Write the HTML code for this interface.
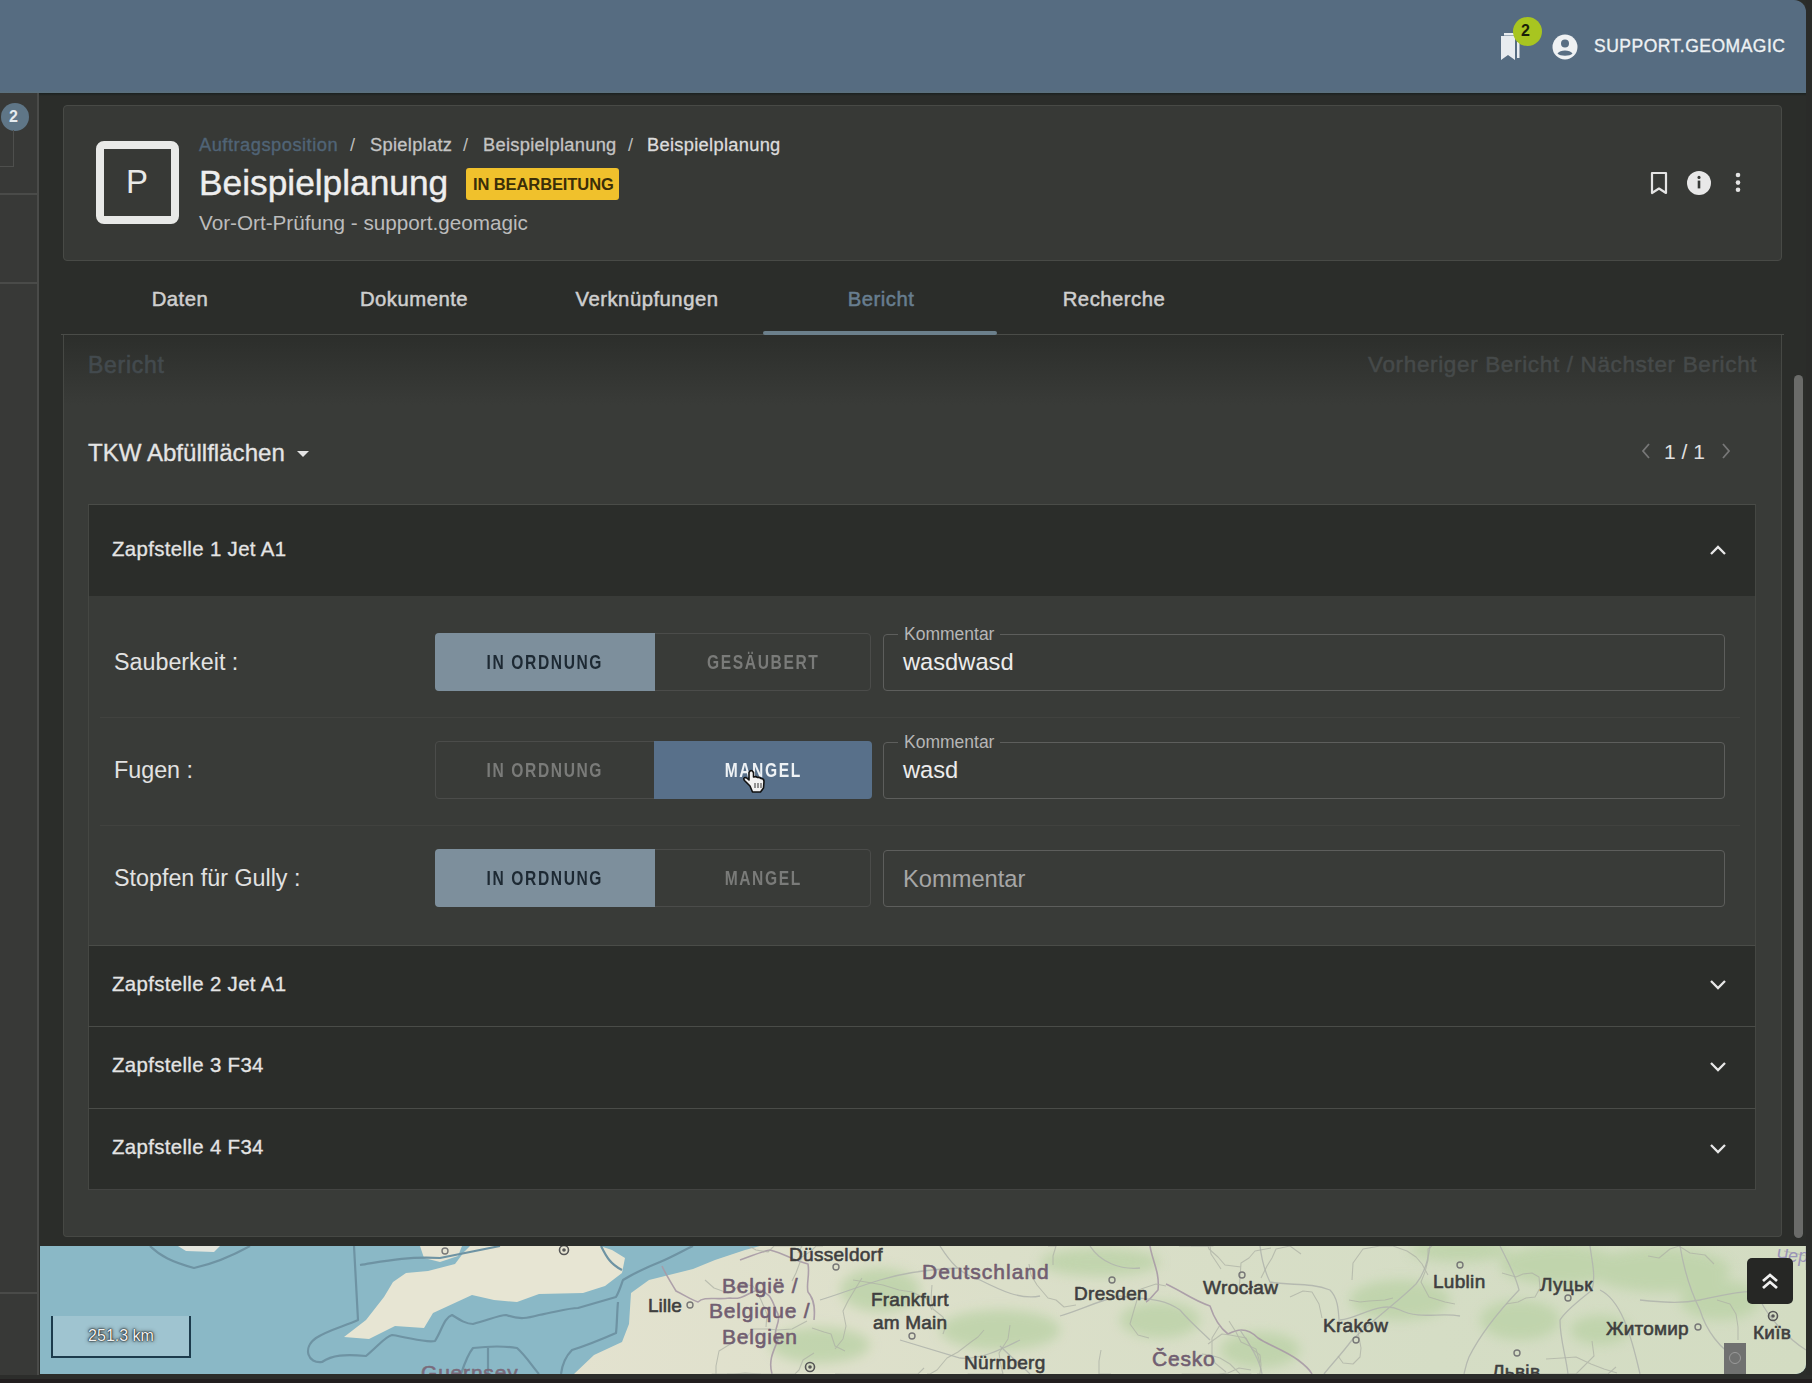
<!DOCTYPE html>
<html><head><meta charset="utf-8">
<style>
*{box-sizing:border-box;margin:0;padding:0}
html,body{width:1812px;height:1383px;overflow:hidden;background:#2b2d2a;font-family:"Liberation Sans",sans-serif;color:#e6e6e6}
.a{position:absolute}
.t{position:absolute;white-space:pre;line-height:1}
#topbar{left:0;top:0;width:1806px;height:93px;background:linear-gradient(#566c81 0,#566c81 90px,#5b707c 93px);border-top-right-radius:12px;}
#rstrip{left:1806px;top:0;width:6px;height:1383px;background:#2a2b29}
#side{left:0;top:93px;width:39px;height:1289px;background:#383937;border-right:2px solid #4a4b49}
.hl{position:absolute;height:2px;background:#4a4b49}
#card{left:63px;top:105px;width:1719px;height:156px;background:#373936;border:1px solid #484a46;border-radius:4px}
#tabline{left:61px;top:334px;width:1723px;height:1px;background:#4a4c48}
#panel{left:63px;top:335px;width:1719px;height:902px;background:#393b38;border:1px solid #464844;border-top:none;border-radius:0 0 4px 4px}
.tab{position:absolute;top:288px;font-weight:400;font-size:20.3px;letter-spacing:0.5px;color:#cfcfcf;-webkit-text-stroke:0.5px currentColor;text-align:center;width:234px}
.acc{position:absolute;left:88px;width:1668px;background:#2b2d2a;border-top:1px solid #4a4c48;border-left:1px solid #454743;border-right:1px solid #454743}
.acct{position:absolute;left:23px;font-size:20.4px;letter-spacing:0.35px;font-weight:400;-webkit-text-stroke:0.3px #e4e4e4;color:#e4e4e4;white-space:pre;line-height:1}
.lbl{position:absolute;left:114px;font-size:23.3px;color:#e2e2e2;white-space:pre;line-height:1}
.tg{position:absolute;left:435px;width:436px;height:58px;border:1px solid #4b4c4a;border-radius:4px}
.btn{position:absolute;top:-1px;height:58px;font-weight:700;font-size:19.5px;text-align:center;line-height:58px}
.btn span{display:inline-block;transform:scaleX(0.8);letter-spacing:2px}
.b1{left:-1px;width:220px;border-radius:4px 0 0 4px}
.b2{left:218px;width:218px;border-radius:0 4px 4px 0}
.sel{background:#7d8f9c;color:#1d2933}
.uns{color:#7a7b79}
.fld{position:absolute;left:883px;width:842px;height:57px;border:1.5px solid #5d5e5c;border-radius:4px}
.flbl{position:absolute;left:14px;top:-9px;padding:0 6px;background:#393b38;font-size:17.5px;color:#b6b6b6;line-height:1;white-space:pre}
.fval{position:absolute;left:19px;top:16px;font-size:23.7px;color:#ececec;line-height:1;white-space:pre}
.rowline{position:absolute;left:100px;width:1640px;height:1px;background:#41423f}
</style></head><body>
<div id="topbar" class="a"></div>
<div id="rstrip" class="a"></div>
<div class="a" style="left:0;top:93px;width:1806px;height:3px;background:linear-gradient(rgba(15,24,24,0.6),rgba(15,24,24,0))"></div>
<div id="side" class="a"></div>
<div class="hl" style="left:0;top:193px;width:37px"></div>
<div class="hl" style="left:0;top:282px;width:37px"></div>
<div class="hl" style="left:0;top:1292px;width:37px"></div>

<div id="card" class="a"></div>
<div id="tabline" class="a"></div>
<div id="panel" class="a"></div>

<!-- topbar content -->
<svg class="a" style="left:1496px;top:30px" width="34" height="34" viewBox="0 0 34 34">
  <path d="M5 6 h14 v24 l-7 -5 l-7 5 z" fill="#e8ecef"/>
  <rect x="21" y="12" width="2.5" height="16" fill="#e8ecef"/>
  <rect x="8" y="3" width="12" height="2.5" fill="#e8ecef"/>
</svg>
<div class="a" style="left:1513px;top:17px;width:29px;height:29px;border-radius:50%;background:#a8c520"></div>
<div class="t" style="left:1521px;top:23px;font-size:16px;font-weight:700;color:#1a2008">2</div>
<svg class="a" style="left:1552px;top:34px" width="26" height="26" viewBox="0 0 26 26">
  <circle cx="13" cy="13" r="12.5" fill="#eef1f3"/>
  <circle cx="13" cy="9.5" r="4" fill="#586e83"/>
  <path d="M5.5 19.5 C8 15.5 18 15.5 20.5 19.5 C18 22.5 8 22.5 5.5 19.5 z" fill="#586e83"/>
</svg>
<div class="t" style="left:1594px;top:38px;font-size:17.5px;color:#eef1f3;letter-spacing:0.5px;-webkit-text-stroke:0.35px currentColor">SUPPORT.GEOMAGIC</div>

<!-- sidebar badge -->
<div class="a" style="left:1px;top:103px;width:28px;height:28px;border-radius:50%;background:#5f7687"></div>
<div class="t" style="left:9px;top:109px;font-size:16px;font-weight:700;color:#e6ecef">2</div>
<div class="a" style="left:0;top:130px;width:14px;height:37px;border-right:1px solid #4e4f4d;border-bottom:1px solid #4e4f4d"></div>

<!-- header card content -->
<div class="a" style="left:96px;top:141px;width:83px;height:83px;border:8px solid #e8e9e7;border-radius:8px;background:#373936"></div>
<div class="t" style="left:126px;top:165px;font-size:33px;color:#e8e9e7">P</div>
<div class="t" style="left:199px;top:136px;font-size:18.3px;letter-spacing:0.5px;color:#506476;-webkit-text-stroke:0.35px currentColor">Auftragsposition</div>
<div class="t" style="left:350px;top:136px;font-size:18.3px;color:#bdbdbd">/</div>
<div class="t" style="left:370px;top:136px;font-size:18.3px;letter-spacing:0.3px;color:#c4c4c4;-webkit-text-stroke:0.3px currentColor">Spielplatz</div>
<div class="t" style="left:463px;top:136px;font-size:18.3px;color:#bdbdbd">/</div>
<div class="t" style="left:483px;top:136px;font-size:18.3px;letter-spacing:0.3px;color:#c4c4c4;-webkit-text-stroke:0.3px currentColor">Beispielplanung</div>
<div class="t" style="left:628px;top:136px;font-size:18.3px;color:#bdbdbd">/</div>
<div class="t" style="left:647px;top:136px;font-size:18.3px;letter-spacing:0.3px;color:#dcdcdc;-webkit-text-stroke:0.3px currentColor">Beispielplanung</div>
<div class="t" style="left:199px;top:165px;font-size:35.3px;color:#eeeeee;-webkit-text-stroke:0.4px currentColor">Beispielplanung</div>
<div class="a" style="left:466px;top:168px;width:153px;height:32px;background:#f0c12c;border-radius:3px"></div>
<div class="t" style="left:473px;top:176px;font-size:16.5px;font-weight:700;color:#3a2e08;letter-spacing:-0.1px">IN BEARBEITUNG</div>
<div class="t" style="left:199px;top:213px;font-size:20.7px;color:#bcbcbc">Vor-Ort-Prüfung - support.geomagic</div>

<svg class="a" style="left:1648px;top:170px" width="22" height="26" viewBox="0 0 22 26">
  <path d="M4 3 h14 v20 l-7 -4.5 l-7 4.5 z" fill="none" stroke="#e4e4e4" stroke-width="2.2" stroke-linejoin="round"/>
</svg>
<svg class="a" style="left:1686px;top:170px" width="26" height="26" viewBox="0 0 26 26">
  <circle cx="13" cy="13" r="12" fill="#e8e8e8"/>
  <rect x="11.7" y="10.6" width="2.6" height="7.8" fill="#373936"/>
  <circle cx="13" cy="7.4" r="1.55" fill="#373936"/>
</svg>
<svg class="a" style="left:1730px;top:168px" width="16" height="28" viewBox="0 0 16 28">
  <circle cx="8" cy="7" r="2.3" fill="#e4e4e4"/>
  <circle cx="8" cy="14.6" r="2.3" fill="#e4e4e4"/>
  <circle cx="8" cy="21.8" r="2.3" fill="#e4e4e4"/>
</svg>

<!-- panel header -->
<div class="a" style="left:64px;top:335px;width:1717px;height:70px;background:linear-gradient(#2c2e2b,#393b38)"></div>
<div class="t" style="left:88px;top:354px;font-size:23px;font-weight:400;letter-spacing:0.7px;-webkit-text-stroke:0.6px currentColor;color:#434a4e">Bericht</div>
<div class="t" style="left:1368px;top:354px;font-size:22.5px;font-weight:400;letter-spacing:0.65px;-webkit-text-stroke:0.5px currentColor;color:#464a4a">Vorheriger Bericht / Nächster Bericht</div>

<div class="t" style="left:88px;top:441px;font-size:24.1px;color:#e4e4e4;-webkit-text-stroke:0.3px currentColor">TKW Abfüllflächen</div>
<svg class="a" style="left:295px;top:448px" width="16" height="12" viewBox="0 0 16 12"><path d="M2 3 h12 l-6 6 z" fill="#e4e4e4"/></svg>
<svg class="a" style="left:1638px;top:441px" width="16" height="20" viewBox="0 0 16 20"><path d="M11 3 l-6 7 l6 7" fill="none" stroke="#777" stroke-width="1.8"/></svg>
<div class="t" style="left:1664px;top:441px;font-size:21px;color:#e0e0e0">1 / 1</div>
<svg class="a" style="left:1718px;top:441px" width="16" height="20" viewBox="0 0 16 20"><path d="M5 3 l6 7 l-6 7" fill="none" stroke="#777" stroke-width="1.8"/></svg>

<!-- scrollbar -->
<div class="a" style="left:1794px;top:375px;width:9px;height:863px;border-radius:5px;background:#6a6b69"></div>

<!-- tabs -->
<div class="tab" style="left:63px">Daten</div>
<div class="tab" style="left:297px">Dokumente</div>
<div class="tab" style="left:530px">Verknüpfungen</div>
<div class="tab" style="left:764px;color:#687e90">Bericht</div>
<div class="tab" style="left:997px">Recherche</div>
<div class="a" style="left:763px;top:331px;width:234px;height:4px;background:#6b7f8b;border-radius:2px;z-index:1"></div>

<!-- accordion -->
<div class="acc" style="top:504px;height:92px"><div class="acct" style="top:34px">Zapfstelle 1 Jet A1</div></div>
<div class="a" style="left:88px;top:596px;width:1668px;height:349px;background:#393b38;border-left:1px solid #454743;border-right:1px solid #454743"></div>
<div class="acc" style="top:945px;height:81px"><div class="acct" style="top:28px">Zapfstelle 2 Jet A1</div></div>
<div class="acc" style="top:1026px;height:82px"><div class="acct" style="top:28px">Zapfstelle 3 F34</div></div>
<div class="acc" style="top:1108px;height:82px;border-bottom:1px solid #434442"><div class="acct" style="top:28px">Zapfstelle 4 F34</div></div>

<svg class="a" style="left:1706px;top:540px" width="24" height="20" viewBox="0 0 24 20"><path d="M5 14 l7 -7 l7 7" fill="none" stroke="#e8e8e8" stroke-width="2.3"/></svg>
<svg class="a" style="left:1706px;top:975px" width="24" height="20" viewBox="0 0 24 20"><path d="M5 6 l7 7 l7 -7" fill="none" stroke="#e8e8e8" stroke-width="2.3"/></svg>
<svg class="a" style="left:1706px;top:1057px" width="24" height="20" viewBox="0 0 24 20"><path d="M5 6 l7 7 l7 -7" fill="none" stroke="#e8e8e8" stroke-width="2.3"/></svg>
<svg class="a" style="left:1706px;top:1139px" width="24" height="20" viewBox="0 0 24 20"><path d="M5 6 l7 7 l7 -7" fill="none" stroke="#e8e8e8" stroke-width="2.3"/></svg>

<!-- rows -->
<div class="lbl" style="top:651px">Sauberkeit :</div>
<div class="lbl" style="top:759px">Fugen :</div>
<div class="lbl" style="top:867px">Stopfen für Gully :</div>
<div class="rowline" style="top:717px"></div>
<div class="rowline" style="top:825px"></div>

<div class="tg" style="top:633px"><div class="btn b1 sel"><span>IN ORDNUNG</span></div><div class="btn b2 uns"><span>GESÄUBERT</span></div></div>
<div class="tg" style="top:741px"><div class="btn b1 uns"><span>IN ORDNUNG</span></div><div class="btn b2" style="background:#58708a;color:#eef2f5"><span>MANGEL</span></div></div>
<div class="tg" style="top:849px"><div class="btn b1 sel"><span>IN ORDNUNG</span></div><div class="btn b2 uns"><span>MANGEL</span></div></div>

<div class="fld" style="top:634px"><div class="flbl">Kommentar</div><div class="fval">wasdwasd</div></div>
<div class="fld" style="top:742px"><div class="flbl">Kommentar</div><div class="fval">wasd</div></div>
<div class="fld" style="top:850px"><div class="fval" style="top:17px;color:#a6a6a6">Kommentar</div></div>

<svg class="a" style="left:738px;top:764px" width="30" height="32" viewBox="738 764 30 32"><path d="M750 786 L744.5 780.5 Q742.5 777.5 746 777.5 L749 780 L749 772.5 Q751 768.5 753.5 772.5 L753.5 777 Q756 776 757.5 777.5 Q760 777 761 778.5 Q764 778.5 764 781.5 L763.5 788 L760.5 792 L752.5 792 Z" fill="#f2f2f2" stroke="#111" stroke-width="1.6" stroke-linejoin="round"/><path d="M755 783 v5 M758 783 v5 M761 783 v5" stroke="#333" stroke-width="1"/></svg>
<div class="a" style="left:0;top:1375px;width:1812px;height:4px;background:#2c2d2b"></div>
<div class="a" style="left:0;top:1379px;width:1812px;height:4px;background:#221e1f"></div>
<!-- map -->
<div id="map" class="a" style="left:40px;top:1246px;width:1766px;height:128px;background:#8ab8c6;overflow:hidden;border-bottom-right-radius:10px">
<svg width="1766" height="128" viewBox="40 1246 1766 128" style="position:absolute;left:0;top:0">
  <defs>
    <linearGradient id="lg" x1="0" x2="1" y1="0" y2="0">
      <stop offset="0" stop-color="#e3e2cf"/>
      <stop offset="0.35" stop-color="#dbdfc9"/>
      <stop offset="0.7" stop-color="#d5ddc5"/>
      <stop offset="1" stop-color="#d3dcc2"/>
    </linearGradient>
    <filter id="bl" x="-5%" y="-50%" width="110%" height="200%"><feGaussianBlur stdDeviation="6"/></filter>
  </defs>
  <!-- Ireland bit -->
  <path d="M178 1246 L220 1246 L214 1252 L186 1251 Z" fill="#e4e6de"/>
  <!-- Wales -->
  <path d="M420 1246 L462 1246 L458 1256 L440 1262 L424 1258 Z" fill="#e6e4d3"/>
  <!-- England south -->
  <path d="M344 1337 L366 1320 L384 1297 L393 1282 L406 1273 L428 1271 L455 1264 L464 1252 L470 1246 L600 1246 L612 1250 L625 1258 L622 1273 L605 1286 L583 1293 L539 1294 L517 1302 L494 1300 L472 1295 L433 1313 L424 1328 L395 1326 L369 1339 Z" fill="#e7e5d3"/>
  <!-- Continent -->
  <path d="M574 1374 L594 1355 L622 1342 L629 1324 L631 1293 L649 1280 L693 1269 L715 1260 L745 1250 L760 1246 L1806 1246 L1806 1374 Z" fill="url(#lg)"/>
  <!-- green patches -->
  <g fill="#bdd3a9" opacity="0.85" filter="url(#bl)">
    <ellipse cx="880" cy="1290" rx="40" ry="22"/>
    <ellipse cx="820" cy="1345" rx="50" ry="18"/>
    <ellipse cx="1000" cy="1330" rx="60" ry="20"/>
    <ellipse cx="1100" cy="1262" rx="60" ry="14"/>
    <ellipse cx="1260" cy="1350" rx="40" ry="18"/>
    <ellipse cx="1400" cy="1300" rx="50" ry="20"/>
    <ellipse cx="1520" cy="1320" rx="40" ry="20"/>
    <ellipse cx="1560" cy="1265" rx="60" ry="20"/>
    <ellipse cx="1660" cy="1270" rx="70" ry="22"/>
    <ellipse cx="1720" cy="1300" rx="40" ry="20"/>
    <ellipse cx="1460" cy="1250" rx="50" ry="12"/>
    <ellipse cx="1160" cy="1320" rx="40" ry="18"/>
    <ellipse cx="1600" cy="1330" rx="30" ry="15"/>
  </g>
  <!-- maritime lines -->
  <g fill="none" stroke="#6e93a3" stroke-width="2.2" stroke-linejoin="round">
    <path d="M150 1246 C160 1256 172 1262 194 1268 C212 1264 232 1256 250 1246"/>
    <path d="M354 1246 L358 1320 C345 1326 328 1330 316 1338 C302 1348 308 1364 322 1362 C332 1355 345 1354 366 1356 C378 1346 386 1336 392 1335 C412 1338 425 1343 435 1341 C442 1330 444 1318 452 1315 C460 1320 466 1324 473 1324 C488 1320 500 1315 506 1315 C520 1320 528 1318 539 1315 C556 1312 568 1308 578 1308 C592 1304 606 1300 616 1297 C620 1290 622 1282 623 1280 C636 1272 650 1266 660 1262 C674 1256 684 1250 693 1246"/>
    <path d="M360 1265 C380 1262 405 1256 440 1258 C460 1254 480 1250 500 1246"/>
    <path d="M618 1302 C617 1312 617 1325 616 1333 C600 1340 585 1346 572 1350 C566 1356 562 1366 561 1374"/>
    <path d="M461 1374 C465 1362 468 1354 473 1348 C490 1346 505 1346 517 1348 C526 1356 532 1366 539 1374"/>
    <path d="M488 1348 L488 1374"/>
    <path d="M601 1246 C606 1256 610 1264 622 1270"/>
  </g>
  <!-- borders -->
  <g fill="none" stroke="#a89aa6" stroke-width="1.6" stroke-linejoin="round" opacity="0.9">
    <path d="M662 1266 C666 1275 672 1284 676 1291 C686 1296 692 1300 698 1302 C704 1296 716 1300 730 1298 C744 1300 748 1292 758 1290 C770 1292 772 1300 776 1310 C784 1322 770 1330 778 1340 C774 1350 768 1360 772 1374"/>
    <path d="M740 1260 C752 1256 760 1252 770 1250 C786 1254 792 1260 808 1264 C810 1275 806 1284 808 1292 C815 1300 815 1310 814 1320"/>
    <path d="M1150 1246 C1152 1260 1160 1272 1158 1290 C1152 1296 1150 1300 1146 1302"/>
    <path d="M1166 1284 C1180 1290 1192 1300 1210 1306 C1214 1318 1220 1328 1228 1334 C1236 1330 1246 1326 1258 1338 C1270 1346 1284 1350 1298 1360 C1306 1366 1310 1370 1312 1374"/>
  </g>
  <g fill="none" stroke="#b2b6ae" stroke-width="1.3" opacity="0.9">
    <path d="M1060 1316 C1080 1310 1100 1300 1120 1296 C1140 1300 1160 1296 1180 1310 C1190 1322 1200 1330 1210 1340"/>
    <path d="M820 1300 C840 1294 860 1286 880 1280 C900 1274 920 1270 960 1268"/>
    <path d="M1260 1246 C1262 1262 1266 1274 1270 1282 C1290 1286 1310 1282 1330 1290 C1340 1300 1338 1316 1340 1330"/>
    <path d="M1430 1246 C1428 1262 1424 1274 1416 1284 C1400 1300 1380 1314 1352 1340 C1340 1356 1330 1366 1324 1374"/>
    <path d="M1500 1246 C1508 1262 1516 1276 1519 1290 C1500 1310 1480 1335 1469 1357 C1466 1364 1465 1370 1464 1374"/>
    <path d="M1340 1320 C1360 1318 1380 1300 1400 1310 C1420 1320 1440 1312 1460 1316"/>
    <path d="M1600 1290 C1620 1300 1630 1330 1640 1374"/>
    <path d="M1680 1246 C1684 1270 1690 1290 1700 1310 C1706 1330 1720 1350 1740 1360"/>
    <path d="M1240 1330 C1250 1345 1260 1360 1262 1374"/>
    <path d="M1090 1246 C1100 1262 1120 1270 1140 1268"/>
    <path d="M940 1246 C950 1262 960 1274 980 1280 C1000 1290 1020 1300 1040 1296"/>
    <path d="M1000 1346 C1010 1356 1020 1364 1030 1374"/>
    <path d="M1760 1300 C1770 1320 1790 1340 1806 1350"/>
    <path d="M1590 1246 C1592 1262 1596 1276 1592 1290 C1580 1300 1566 1310 1560 1320 C1560 1340 1566 1356 1568 1374"/>
    <path d="M1640 1300 C1660 1302 1680 1304 1700 1300 C1720 1296 1740 1290 1760 1292"/>
    <path d="M900 1340 C920 1346 940 1352 960 1358 C980 1360 1000 1350 1020 1340"/>
  </g>
  <g fill="none" stroke="#aeb2a6" stroke-width="1.1" opacity="0.75" stroke-linejoin="round">
<path d="M1053 1265 L1053 1256 L1056 1246 L1053 1246 L1048 1246"/>
<path d="M1301 1254 L1290 1246 L1276 1249 L1272 1258 L1267 1266 L1261 1278"/>
<path d="M1322 1318 L1319 1304 L1312 1292 L1303 1291 L1290 1297"/>
<path d="M1166 1286 L1156 1284 L1141 1289 L1137 1300 L1134 1310 L1130 1324 L1138 1335 L1149 1338"/>
<path d="M1717 1300 L1730 1304 L1736 1314 L1738 1327 L1738 1340"/>
<path d="M1616 1367 L1608 1374 L1606 1374 L1599 1374 L1586 1374 L1575 1374 L1570 1374 L1567 1374 L1568 1374 L1573 1374"/>
<path d="M1241 1267 L1225 1265 L1218 1257 L1209 1249 L1208 1246 L1201 1246 L1191 1246"/>
<path d="M1229 1321 L1236 1332 L1241 1342 L1256 1349 L1260 1363"/>
<path d="M1506 1304 L1518 1302 L1526 1298 L1535 1297 L1540 1288 L1539 1277 L1532 1273 L1523 1274 L1516 1277 L1502 1273"/>
<path d="M862 1278 L857 1286 L848 1301 L843 1311 L846 1326 L843 1339 L835 1349"/>
<path d="M924 1368 L918 1374 L905 1374 L890 1374 L879 1374 L873 1374 L865 1374 L864 1374 L851 1374 L835 1374"/>
<path d="M1592 1341 L1594 1356 L1583 1367 L1576 1374 L1566 1374 L1551 1374 L1534 1374 L1530 1374 L1526 1374"/>
<path d="M1226 1372 L1215 1363 L1212 1355 L1212 1338 L1220 1325"/>
<path d="M1221 1269 L1211 1254 L1210 1246 L1213 1246 L1207 1246 L1194 1246 L1179 1246"/>
<path d="M1367 1322 L1358 1332 L1361 1348 L1360 1357 L1353 1364 L1343 1363 L1338 1356"/>
<path d="M932 1310 L927 1299 L912 1292 L899 1290 L883 1285 L866 1282 L853 1280"/>
<path d="M1271 1248 L1255 1251 L1249 1258 L1241 1263 L1240 1278 L1239 1291"/>
<path d="M1546 1359 L1562 1358 L1576 1357 L1591 1364 L1604 1369 L1617 1373"/>
<path d="M1455 1304 L1445 1302 L1429 1297 L1421 1282 L1425 1272 L1428 1260 L1428 1249 L1432 1246"/>
<path d="M932 1285 L931 1299 L933 1309 L943 1317 L946 1325 L943 1334"/>
<path d="M1428 1275 L1422 1264 L1416 1257 L1407 1251 L1393 1246 L1380 1246 L1363 1249 L1353 1263 L1352 1280"/>
<path d="M792 1281 L796 1273 L802 1257 L811 1251 L816 1246 L823 1246"/>
<path d="M798 1253 L802 1246 L797 1246 L785 1246 L774 1246 L768 1252 L756 1250 L749 1246"/>
<path d="M747 1337 L753 1329 L768 1329 L778 1330 L792 1329 L807 1321"/>
<path d="M1784 1251 L1794 1253 L1806 1256 L1806 1246 L1806 1246 L1806 1246 L1806 1246 L1806 1255 L1806 1270"/>
<path d="M1393 1298 L1385 1300 L1369 1301 L1360 1302 L1349 1300"/>
<path d="M1251 1370 L1239 1368 L1228 1373 L1218 1374 L1204 1374 L1189 1374 L1182 1374 L1186 1374 L1190 1374 L1201 1374"/>
<path d="M705 1280 L714 1288 L728 1293 L743 1284 L753 1286 L761 1300 L767 1314 L766 1327"/>
<path d="M1010 1325 L1008 1339 L999 1353 L1001 1366 L1003 1374 L995 1374 L985 1374 L972 1374 L968 1374 L971 1374"/>
<path d="M814 1353 L803 1360 L799 1370 L795 1374 L779 1374 L774 1374 L764 1374 L747 1374 L734 1374 L727 1374"/>
<path d="M1202 1354 L1210 1355 L1220 1358 L1230 1364 L1240 1374 L1244 1374 L1251 1374 L1247 1374 L1249 1374 L1246 1374"/>
<path d="M1208 1344 L1222 1334 L1230 1335 L1246 1338 L1252 1349 L1260 1355 L1261 1365 L1260 1374 L1257 1374"/>
<path d="M845 1351 L835 1346 L831 1334 L824 1332 L812 1328"/>
<path d="M1029 1264 L1031 1275 L1037 1285 L1048 1298 L1056 1300 L1064 1307 L1076 1305"/>
<path d="M1648 1256 L1659 1258 L1670 1249 L1679 1246 L1690 1253 L1705 1255 L1714 1264"/>
<path d="M732 1343 L719 1351 L716 1366 L716 1374 L712 1374 L722 1374 L734 1374 L745 1373 L761 1374"/>
<path d="M984 1330 L978 1337 L971 1342 L958 1352 L947 1358 L937 1370 L930 1374 L929 1374 L927 1374"/>
<path d="M1101 1350 L1099 1361 L1099 1374 L1101 1374 L1111 1374"/>
</g>
  <!-- city dots -->
  <g fill="none" stroke="#777" stroke-width="1.4">
    <circle cx="445" cy="1251" r="3"/>
    <circle cx="690" cy="1305" r="3"/>
    <circle cx="836" cy="1267" r="3"/>
    <circle cx="912" cy="1336" r="3"/>
    <circle cx="1112" cy="1280" r="3"/>
    <circle cx="1242" cy="1275" r="3"/>
    <circle cx="1356" cy="1340" r="3"/>
    <circle cx="1460" cy="1265" r="3"/>
    <circle cx="1568" cy="1298" r="3"/>
    <circle cx="1698" cy="1327" r="3"/>
    <circle cx="1517" cy="1353" r="3"/>
  </g>
  <g fill="none" stroke="#555" stroke-width="1.6">
    <circle cx="564" cy="1250" r="4.5"/><circle cx="810" cy="1367" r="4.5"/><circle cx="1773" cy="1316" r="4.5"/>
  </g>
  <g fill="#555"><circle cx="564" cy="1250" r="1.8"/><circle cx="810" cy="1367" r="1.8"/><circle cx="1773" cy="1316" r="1.8"/></g>
  <!-- labels -->
  <g font-family="Liberation Sans" font-size="19" fill="#3f3f3f" stroke="#3f3f3f" stroke-width="0.6" stroke-linejoin="round">
    <text x="648" y="1312">Lille</text>
    <text x="789" y="1261" letter-spacing="0.3">Düsseldorf</text>
    <text x="871" y="1306" letter-spacing="0.2">Frankfurt</text>
    <text x="873" y="1329" letter-spacing="0.2">am Main</text>
    <text x="964" y="1369" letter-spacing="0.3">Nürnberg</text>
    <text x="1074" y="1300" letter-spacing="0.3">Dresden</text>
    <text x="1203" y="1294" letter-spacing="0.4">Wrocław</text>
    <text x="1323" y="1332" letter-spacing="0.3">Kraków</text>
    <text x="1433" y="1288" letter-spacing="0.3">Lublin</text>
    <text x="1540" y="1291" letter-spacing="0.3">Луцьк</text>
    <text x="1606" y="1335" letter-spacing="0.2">Житомир</text>
    <text x="1753" y="1339" letter-spacing="0.3">Київ</text>
    <text x="1492" y="1378" letter-spacing="0.3">Львів</text>
  </g>
  <g font-family="Liberation Sans" font-size="21" fill="#715e71" stroke="#715e71" stroke-width="0.6" stroke-linejoin="round">
    <text x="922" y="1279" letter-spacing="1">Deutschland</text>
    <text x="722" y="1293" letter-spacing="0.8">België /</text>
    <text x="709" y="1318" letter-spacing="0.8">Belgique /</text>
    <text x="722" y="1344" letter-spacing="0.8">Belgien</text>
    <text x="1152" y="1366" letter-spacing="0.8">Česko</text>
    <text x="421" y="1380" letter-spacing="0.8" fill="#7a6b7b" stroke="#7a6b7b">Guernsey</text>
    <text x="1776" y="1262" font-size="18" font-style="italic" fill="#9a93b8" stroke="none">Чер</text>
  </g>
</svg>
<!-- scale box -->
<div class="a" style="left:11px;top:70px;width:140px;height:42px;border:2px solid #1c3b4c;border-top:none;background:rgba(255,255,255,0.18)"></div>
<div class="t" style="left:11px;top:82px;width:140px;text-align:center;font-size:16px;color:#f2f2f2;text-shadow:0 0 2px #111,0 0 4px #222,0 0 1px #000">251.3 km</div>
<!-- go top btn -->
<div class="a" style="left:1707px;top:12px;width:46px;height:46px;background:#262725;border-radius:5px"></div>
<svg class="a" style="left:1717px;top:22px" width="26" height="26" viewBox="0 0 26 26"><path d="M6 13 l7 -6 l7 6 M6 20 l7 -6 l7 6" fill="none" stroke="#f0f0f0" stroke-width="2.8"/></svg>
<div class="a" style="left:1684px;top:97px;width:22px;height:31px;background:#707170"></div>
<div class="a" style="left:1689px;top:106px;width:12px;height:12px;border-radius:50%;border:1.5px solid #9a9a9a"></div>
</div>

</body></html>
